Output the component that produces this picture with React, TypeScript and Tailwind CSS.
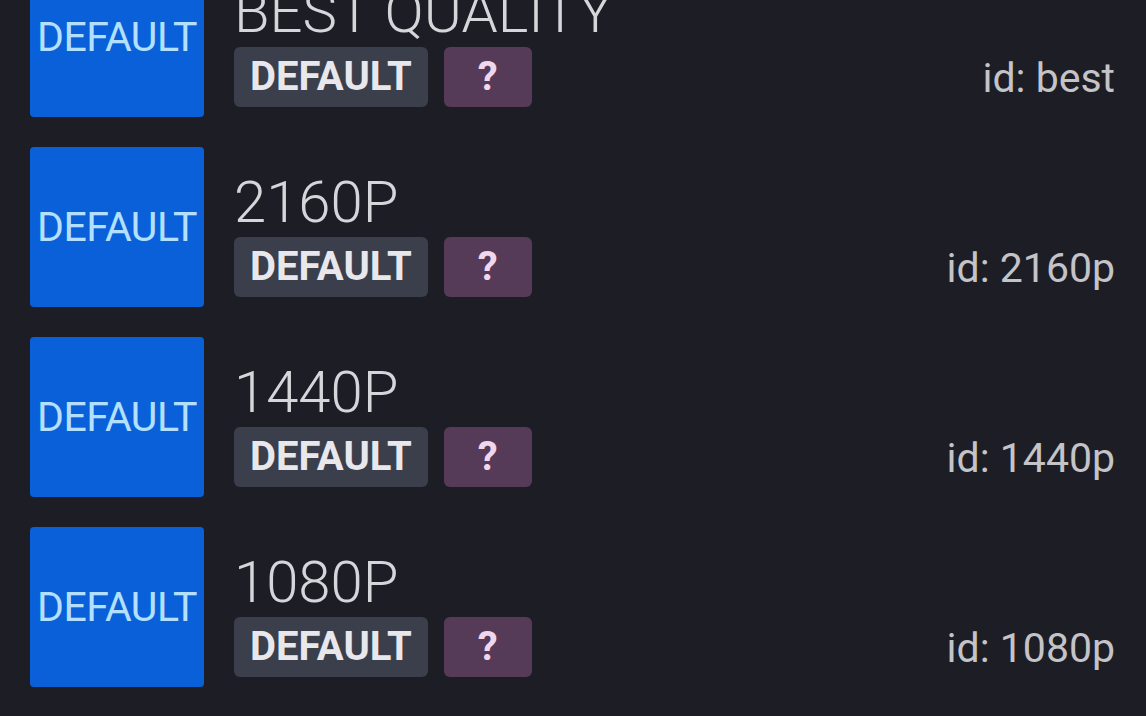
import React from 'react';

interface Quality {
  label: string;
  id: string;
}

const qualities: Quality[] = [
  { label: 'BEST QUALITY', id: 'best' },
  { label: '2160P', id: '2160p' },
  { label: '1440P', id: '1440p' },
  { label: '1080P', id: '1080p' },
  { label: '720P', id: '720p' }
];

function QualityRow({ item }: { item: Quality }) {
  return (
    <div className="flex h-[160px] shrink-0">
      {/* Miniatura */}
      <div className="flex h-[160px] w-[174px] shrink-0 items-center justify-center rounded-[4px] bg-[#0a60d8]">
        <span className="text-[41px] leading-none tracking-[-0.5px] text-[#b4e0ff]">DEFAULT</span>
      </div>

      <div className="ml-[30px] flex flex-1 flex-col pt-[27px] pr-[31px]">
        <div className="h-[56px] text-[58px] font-light leading-[56px] text-[#d6d6da] whitespace-nowrap">
          {item.label}
        </div>
        <div className="mt-[7px] flex items-end">
          <span className="flex h-[60px] items-center rounded-[6px] bg-[#3a3f4b] px-4 text-[40px] font-bold text-[#e8e8ec]">
            DEFAULT
          </span>
          <span className="ml-4 flex h-[60px] w-[88px] items-center justify-center rounded-[6px] bg-[#563b58] text-[40px] font-bold text-[#f2d6ec]">
            ?
          </span>
          <span className="ml-auto mb-[-2px] text-[41px] leading-normal text-[#c4c4c8]">id: {item.id}</span>
        </div>
      </div>
    </div>
  );
}

export default function App() {
  return (
    <div className="h-[716px] w-full overflow-hidden bg-[#1d1e25] font-['Roboto',sans-serif]">
      <div className="mt-[-43px] flex flex-col gap-[30px] pl-[30px]">
        {qualities.map(q => (
          <QualityRow key={q.id} item={q} />
        ))}
      </div>
    </div>
  );
}
